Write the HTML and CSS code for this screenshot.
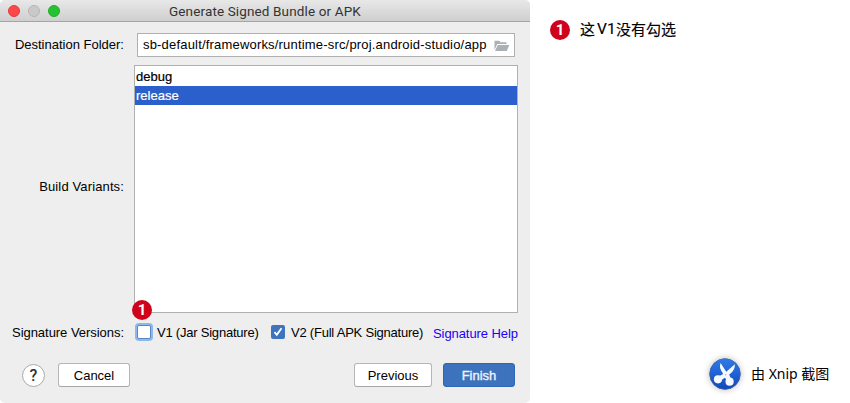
FILE: index.html
```
<!DOCTYPE html>
<html lang="zh-CN">
<head>
<meta charset="utf-8">
<title>Generate Signed Bundle or APK</title>
<link rel="stylesheet" href="styles.css">
</head>
<body>
<main class="page">
  <section class="window">
    <header class="titlebar">
      <div class="lights"><i class="light red"></i><i class="light gray"></i><i class="light green"></i></div>
      <h1 class="title">Generate Signed Bundle or APK</h1>
    </header>
    <div class="row folder-row">
      <label class="label"><span class="t-dest">Destination Folder:</span></label>
      <div class="input">
        <span class="path">sb-default/frameworks/runtime-src/proj.android-studio/app</span>
        <svg class="folder" width="16" height="12" viewBox="0 0 16 12"><path d="M.5 10V.7h4.700l1.300 1.600h6V4H3.300z" fill="#a9b1b7"/><path d="M3.800 5h11.500l-2.500 6H1z" fill="#a9b1b7"/></svg>
      </div>
    </div>
    <div class="row list-row">
      <label class="label build"><span class="t-build">Build Variants:</span></label>
      <div class="list">
        <div class="item">debug</div>
        <div class="item selected">release</div>
      </div>
    </div>
    <div class="row sig-row">
      <label class="label"><span class="t-sig">Signature Versions:</span></label>
      <div class="check focused"><i class="badge pin">
        <svg width="20" height="20" viewBox="0 0 20 20"><circle cx="10" cy="10" r="10" fill="#d0021b"/></svg><b>1</b></i></div>
      <span class="v1">V1 (Jar Signature)</span>
      <div class="check checked"><svg width="14" height="14" viewBox="0 0 14 14"><path d="M3.500 7.200l2.300 2.600 4.700-6.500" fill="none" stroke="#fff" stroke-width="1.900"/></svg></div>
      <span class="v2">V2 (Full APK Signature)</span>
      <a class="link">Signature Help</a>
    </div>
    <footer class="buttons">
      <div class="help">?</div>
      <div class="btn cancel"><span>Cancel</span></div>
      <div class="btn previous"><span>Previous</span></div>
      <div class="btn finish"><span>Finish</span></div>
    </footer>
  </section>
  <aside class="notes">
    <div class="note">
      <i class="badge"><svg width="20" height="20" viewBox="0 0 20 20"><circle cx="10" cy="10" r="10" fill="#d0021b"/></svg><b>1</b></i>
      <p class="note-text"><span>这</span><span class="latin">V1</span><span>没有勾选</span></p>
    </div>
    <div class="credit">
      <svg class="logo" width="32" height="32" viewBox="0 0 32 32">
        <defs><linearGradient id="g" x1="0" y1="0" x2="0" y2="1"><stop offset="0" stop-color="#2e7be8"/><stop offset="1" stop-color="#1047bd"/></linearGradient></defs>
        <circle cx="16" cy="16" r="15.500" fill="url(#g)" stroke="#4a6896" stroke-width=".8"/>
        <g fill="#f5f8fc">
          <path d="M11.600 5C10.600 7.600 10.800 10 12 12.200L14.200 16 9.500 18.500l2 4L16 19.800l2 3.200 4-2-1.800-4.400c3.700-2.500 6-6.300 5.600-10.300L17.300 13.800z"/>
          <circle cx="9" cy="21.300" r="4.100"/><circle cx="20.600" cy="23.700" r="4.100"/>
        </g>
        <circle cx="16.700" cy="16.800" r=".7" fill="#8fb2e8"/>
      </svg>
      <p class="credit-text">由 <span class="xnip">Xnip</span> 截图</p>
    </div>
  </aside>
</main>
</body>
</html>
```
FILE: styles.css
```
* { box-sizing: border-box; }
body { margin: 0; background: #fff; color: #000; font: 13px/18px "Liberation Sans", Arial, sans-serif; }
h1, p { margin: 0; font-weight: normal; }
span, a { white-space: nowrap; }
.page { display: flex; width: 850px; height: 403px; }
.window { width: 530px; height: 403px; background: #eee; border-radius: 5px; overflow: hidden; display: flex; flex-direction: column; }
.titlebar { display: flex; align-items: center; height: 22px; padding-left: 8px; background: linear-gradient(#e8e8e8, #cfcfcf); border-bottom: 1px solid #a5a5a5; }
.lights { display: flex; gap: 8px; width: 161px; }
.light { width: 12px; height: 12px; border-radius: 50%; border: 1px solid #b5b5b5; background: #c9c9c9; }
.light.red { background: #fc4848; border-color: #e33c3c; }
.light.green { background: #27c232; border-color: #1fac2a; }
.title { font: 13.5px/20px Roboto, sans-serif; color: #333; white-space: nowrap; letter-spacing: .13px; padding-top: 1px; }
.row { display: flex; }
.label { width: 124px; text-align: right; flex: none; }
.folder-row { margin-top: 11px; height: 24px; align-items: center; }
.input { margin-left: 13px; width: 378px; height: 24px; border: 1px solid #b0b0b0; background: #fff; display: flex; align-items: center; padding-left: 5px; }
.path { width: 351px; letter-spacing: .185px; }
.folder { flex: none; margin-top: 1px; }
.list-row { margin-top: 8px; height: 248px; align-items: center; }
.build { padding-bottom: 4px; }
.t-build { letter-spacing: .13px; }
.t-sig { letter-spacing: -.04px; }
.list { margin-left: 10px; width: 384px; height: 248px; border: 1px solid #b0b0b0; background: #fff; padding-top: 1px; }
.item { height: 19px; line-height: 19px; padding-left: 1px; -webkit-text-stroke: .2px; }
.item.selected { background: #2a5fcc; color: #fff; }
.sig-row { margin-top: 10px; height: 18px; align-items: center; }
.sig-row .label, .v1, .v2 { padding-top: 1px; }
.check { position: relative; flex: none; width: 14px; height: 14px; border-radius: 2px; }
.focused { margin-left: 13px; background: #fff; border: 1px solid #5c86bf; box-shadow: 0 0 0 2px #8db7ef; }
.checked { background: #3e73bd; border-radius: 2px; }
.checked svg { display: block; }
.v1 { flex: none; width: 120px; padding-left: 6px; letter-spacing: -.22px; }
.v2 { flex: none; width: 148px; padding-left: 6px; letter-spacing: -.22px; }
.link { color: #2000f5; padding-top: 3px; letter-spacing: -.08px; }
.badge { position: relative; display: block; width: 20px; height: 20px; font-style: normal; color: #fff; }
.badge svg { display: block; }
.badge b { position: absolute; inset: 0; text-align: center; font: 700 15px/21px Roboto, sans-serif; }
.badge.pin { position: absolute; left: -6px; top: -26px; }
.buttons { display: flex; align-items: center; margin-top: 22px; height: 24px; padding-left: 22px; }
.help { width: 23px; height: 23px; border: 1px solid #a9a9a9; border-radius: 50%; background: #fff; color: #333; text-align: center; font: 500 16px/21px Roboto, sans-serif; }
.btn { height: 24px; border: 1px solid #b5b5b5; border-bottom-color: #a5a5a5; border-radius: 3px; background: #fff; text-align: center; line-height: 23px; }
.cancel { width: 72px; margin-left: 13px; }
.previous { width: 78px; margin-left: 224px; }
.finish { width: 72px; margin-left: 11px; color: #eef3fa; background: #3d72bc; border-color: #2e66b4; -webkit-text-stroke: .35px; }
.notes { flex: 1; display: flex; flex-direction: column; justify-content: space-between; padding: 20px 20px 13px 20px; }
.note { display: flex; align-items: center; height: 20px; }
.note-text { display: flex; margin: -2px 0 0 10px; font: 15px/20px "Noto Sans CJK SC", sans-serif; -webkit-text-stroke: .15px; }
.latin { width: 21px; padding-left: 2px; font-family: Roboto, sans-serif; font-size: 15.5px; }
.credit { display: flex; align-items: center; height: 33px; align-self: flex-end; width: 121px; }
.logo { flex: none; border-radius: 50%; box-shadow: 0 0 6px rgba(0,0,0,.25); }
.credit-text { margin-left: 10px; white-space: nowrap; font: 14px/20px "Noto Sans", "Noto Sans CJK SC", sans-serif; }
```
